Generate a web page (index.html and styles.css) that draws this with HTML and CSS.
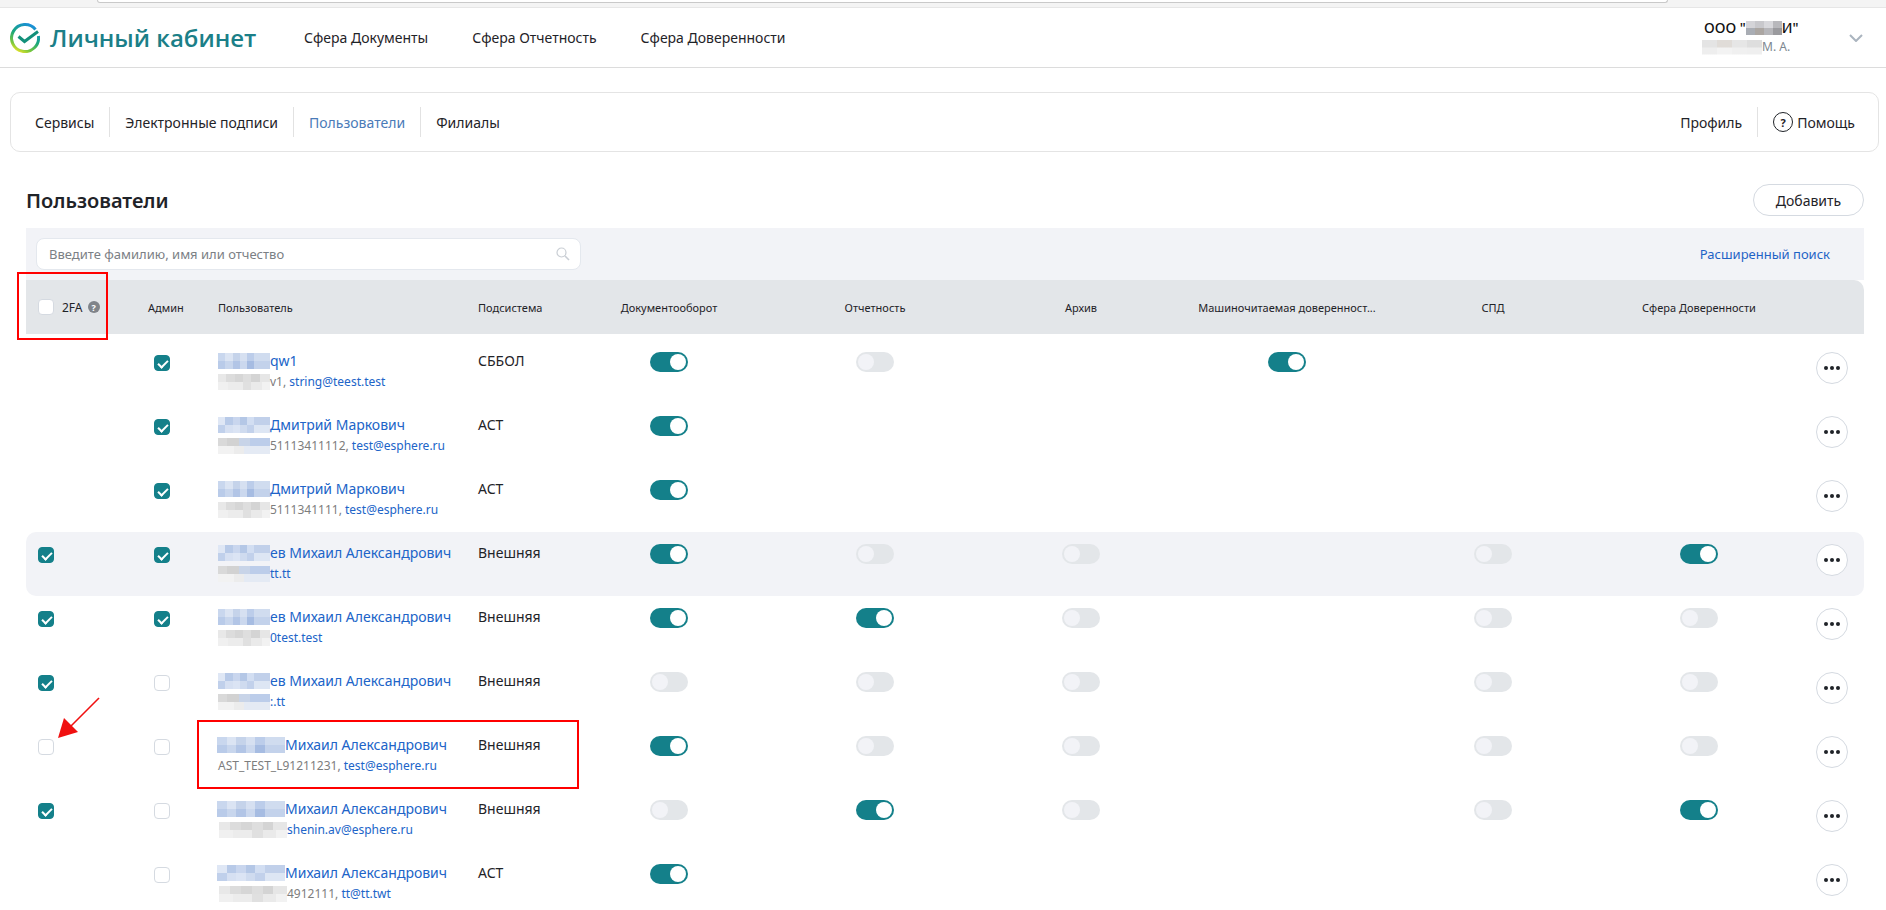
FILE: index.html
```html
<!DOCTYPE html>
<html lang="ru">
<head>
  <meta charset="UTF-8">
  <title>Личный кабинет</title>
  <link rel="stylesheet" href="styles.css">
</head>
<body>
  <div class="page">
    <div class="browser-strip"><div class="browser-pill"></div></div>

    <header class="header">
      <div class="logo">
        <svg class="logo-icon" viewBox="0 0 30 30" width="30" height="30">
          <defs>
            <linearGradient id="ring" x1="0.7" y1="0" x2="0.2" y2="1">
              <stop offset="0" stop-color="#1b8fd8"/>
              <stop offset="0.45" stop-color="#17a67c"/>
              <stop offset="0.8" stop-color="#7cc83c"/>
              <stop offset="1" stop-color="#e8e32c"/>
            </linearGradient>
          </defs>
          <path d="M25.5 6.5 A13.5 13.5 0 1 0 28.4 13" fill="none" stroke="url(#ring)" stroke-width="3"/>
          <path d="M8.5 13.5 L14.5 18.5 L28 8.5" fill="none" stroke="#12907a" stroke-width="3"/>
        </svg>
        <span class="logo-text">Личный кабинет</span>
      </div>
      <nav class="top-nav">
        <a>Сфера Документы</a>
        <a>Сфера Отчетность</a>
        <a>Сфера Доверенности</a>
      </nav>
      <div class="account">
        <div class="account-org">ООО "<span class="pix pix-org"></span>И"</div>
        <div class="account-user"><span class="pix pix-user"></span>М. А.</div>
      </div>
      <svg class="chevron" viewBox="0 0 14 8" width="14" height="8">
        <path d="M1 1 L7 7 L13 1" fill="none" stroke="#aab4bf" stroke-width="2"/>
      </svg>
    </header>

    <div class="sub-nav">
      <a class="sub-link">Сервисы</a>
      <a class="sub-link">Электронные подписи</a>
      <a class="sub-link active">Пользователи</a>
      <a class="sub-link last">Филиалы</a>
      <a class="sub-link right">Профиль</a>
      <a class="sub-link last help"><span class="help-icon">?</span>Помощь</a>
    </div>

    <main class="content">
      <div class="title-row">
        <h1>Пользователи</h1>
        <button class="btn-add">Добавить</button>
      </div>

      <div class="search-band">
        <div class="search-box">
          <span class="placeholder">Введите фамилию, имя или отчество</span>
          <svg viewBox="0 0 14 14" width="14" height="14">
            <circle cx="5.5" cy="5.5" r="4.5" fill="none" stroke="#c9ced4" stroke-width="1.2"/>
            <path d="M9 9 L13 13" stroke="#c9ced4" stroke-width="1.6"/>
          </svg>
        </div>
        <a class="adv-search">Расширенный поиск</a>
      </div>

      <div class="grid-row table-head">
        <div class="cell-first"><span class="check"></span><span class="fa">2FA</span><span class="fa-help">?</span></div>
        <div>Админ</div>
        <div>Пользователь</div>
        <div>Подсистема</div>
        <div class="center">Документооборот</div>
        <div class="center">Отчетность</div>
        <div class="center">Архив</div>
        <div class="center">Машиночитаемая доверенност...</div>
        <div class="center">СПД</div>
        <div class="center">Сфера Доверенности</div>
        <div></div>
      </div>

      <div class="grid-row user-row">
        <div class="cell-first"></div>
        <div class="cell-admin"><span class="check on"></span></div>
        <div>
          <div class="user-name"><span class="pix pix-n"></span>qw1</div>
          <div class="user-sub"><span class="pix pix-s"></span>v1, <a>string@teest.test</a></div>
        </div>
        <div class="system">СББОЛ</div>
        <div class="center"><span class="toggle on"></span></div>
        <div class="center"><span class="toggle"></span></div>
        <div class="center"></div>
        <div class="center"><span class="toggle on"></span></div>
        <div class="center"></div>
        <div class="center"></div>
        <div class="cell-more"><button class="btn-more"><i></i><i></i><i></i></button></div>
      </div>

      <div class="grid-row user-row">
        <div class="cell-first"></div>
        <div class="cell-admin"><span class="check on"></span></div>
        <div>
          <div class="user-name"><span class="pix pix-n alt"></span>Дмитрий Маркович</div>
          <div class="user-sub"><span class="pix pix-s alt"></span>51113411112, <a>test@esphere.ru</a></div>
        </div>
        <div class="system">АСТ</div>
        <div class="center"><span class="toggle on"></span></div>
        <div class="center"></div>
        <div class="center"></div>
        <div class="center"></div>
        <div class="center"></div>
        <div class="center"></div>
        <div class="cell-more"><button class="btn-more"><i></i><i></i><i></i></button></div>
      </div>

      <div class="grid-row user-row">
        <div class="cell-first"></div>
        <div class="cell-admin"><span class="check on"></span></div>
        <div>
          <div class="user-name"><span class="pix pix-n"></span>Дмитрий Маркович</div>
          <div class="user-sub"><span class="pix pix-s"></span>5111341111, <a>test@esphere.ru</a></div>
        </div>
        <div class="system">АСТ</div>
        <div class="center"><span class="toggle on"></span></div>
        <div class="center"></div>
        <div class="center"></div>
        <div class="center"></div>
        <div class="center"></div>
        <div class="center"></div>
        <div class="cell-more"><button class="btn-more"><i></i><i></i><i></i></button></div>
      </div>

      <div class="grid-row user-row selected">
        <div class="cell-first"><span class="check on"></span></div>
        <div class="cell-admin"><span class="check on"></span></div>
        <div>
          <div class="user-name"><span class="pix pix-n alt"></span>ев Михаил Александрович</div>
          <div class="user-sub"><span class="pix pix-s alt"></span><a>tt.tt</a></div>
        </div>
        <div class="system">Внешняя</div>
        <div class="center"><span class="toggle on"></span></div>
        <div class="center"><span class="toggle"></span></div>
        <div class="center"><span class="toggle"></span></div>
        <div class="center"></div>
        <div class="center"><span class="toggle"></span></div>
        <div class="center"><span class="toggle on"></span></div>
        <div class="cell-more"><button class="btn-more"><i></i><i></i><i></i></button></div>
      </div>

      <div class="grid-row user-row">
        <div class="cell-first"><span class="check on"></span></div>
        <div class="cell-admin"><span class="check on"></span></div>
        <div>
          <div class="user-name"><span class="pix pix-n"></span>ев Михаил Александрович</div>
          <div class="user-sub"><span class="pix pix-s"></span><a>0test.test</a></div>
        </div>
        <div class="system">Внешняя</div>
        <div class="center"><span class="toggle on"></span></div>
        <div class="center"><span class="toggle on"></span></div>
        <div class="center"><span class="toggle"></span></div>
        <div class="center"></div>
        <div class="center"><span class="toggle"></span></div>
        <div class="center"><span class="toggle"></span></div>
        <div class="cell-more"><button class="btn-more"><i></i><i></i><i></i></button></div>
      </div>

      <div class="grid-row user-row">
        <div class="cell-first"><span class="check on"></span></div>
        <div class="cell-admin"><span class="check"></span></div>
        <div>
          <div class="user-name"><span class="pix pix-n alt"></span>ев Михаил Александрович</div>
          <div class="user-sub"><span class="pix pix-s alt"></span><a>:.tt</a></div>
        </div>
        <div class="system">Внешняя</div>
        <div class="center"><span class="toggle"></span></div>
        <div class="center"><span class="toggle"></span></div>
        <div class="center"><span class="toggle"></span></div>
        <div class="center"></div>
        <div class="center"><span class="toggle"></span></div>
        <div class="center"><span class="toggle"></span></div>
        <div class="cell-more"><button class="btn-more"><i></i><i></i><i></i></button></div>
      </div>

      <div class="grid-row user-row">
        <div class="cell-first"><span class="check"></span></div>
        <div class="cell-admin"><span class="check"></span></div>
        <div>
          <div class="user-name"><span class="pix pix-n wide"></span>Михаил Александрович</div>
          <div class="user-sub">AST_TEST_L91211231, <a>test@esphere.ru</a></div>
        </div>
        <div class="system">Внешняя</div>
        <div class="center"><span class="toggle on"></span></div>
        <div class="center"><span class="toggle"></span></div>
        <div class="center"><span class="toggle"></span></div>
        <div class="center"></div>
        <div class="center"><span class="toggle"></span></div>
        <div class="center"><span class="toggle"></span></div>
        <div class="cell-more"><button class="btn-more"><i></i><i></i><i></i></button></div>
      </div>

      <div class="grid-row user-row">
        <div class="cell-first"><span class="check on"></span></div>
        <div class="cell-admin"><span class="check"></span></div>
        <div>
          <div class="user-name"><span class="pix pix-n wide"></span>Михаил Александрович</div>
          <div class="user-sub"><span class="pix pix-s wide"></span><a>shenin.av@esphere.ru</a></div>
        </div>
        <div class="system">Внешняя</div>
        <div class="center"><span class="toggle"></span></div>
        <div class="center"><span class="toggle on"></span></div>
        <div class="center"><span class="toggle"></span></div>
        <div class="center"></div>
        <div class="center"><span class="toggle"></span></div>
        <div class="center"><span class="toggle on"></span></div>
        <div class="cell-more"><button class="btn-more"><i></i><i></i><i></i></button></div>
      </div>

      <div class="grid-row user-row">
        <div class="cell-first"></div>
        <div class="cell-admin"><span class="check"></span></div>
        <div>
          <div class="user-name"><span class="pix pix-n wide alt"></span>Михаил Александрович</div>
          <div class="user-sub"><span class="pix pix-s wide"></span>4912111, <a>tt@tt.twt</a></div>
        </div>
        <div class="system">АСТ</div>
        <div class="center"><span class="toggle on"></span></div>
        <div class="center"></div>
        <div class="center"></div>
        <div class="center"></div>
        <div class="center"></div>
        <div class="center"></div>
        <div class="cell-more"><button class="btn-more"><i></i><i></i><i></i></button></div>
      </div>
    </main>

    <!-- red marks drawn over the screenshot -->
    <div class="mark mark-2fa"></div>
    <div class="mark mark-user"></div>
    <svg class="mark-arrow" viewBox="0 0 44 42" width="44" height="42">
      <path d="M42 1 L12 31" stroke="#f01010" stroke-width="1.6"/>
      <path d="M1 41 L7 21 L21 35 Z" fill="#f01010"/>
    </svg>
  </div>
</body>
</html>
```

FILE: styles.css
```css
* {
  box-sizing: border-box;
}
html, body {
  margin: 0;
  height: 910px;
  overflow: hidden;
}
body {
  font-family: "Noto Sans", "Open Sans", sans-serif;
  font-size: 14px;
  color: #1f2328;
  background-color: #fff;
}
a {
  color: inherit;
}
.page {
  position: relative;
  height: 910px;
  overflow: hidden;
}
.browser-strip {
  height: 7px;
  background-color: #f4f4f4;
  padding-left: 97px;
  padding-right: 218px;
}
.browser-pill {
  height: 3px;
  background-color: #fff;
  border: 1px solid #c9c9c9;
  border-top: none;
  border-radius: 0 0 6px 6px;
}

/* top bar */
.header {
  display: flex;
  align-items: center;
  height: 61px;
  padding: 0 23px 0 10px;
  border-top: 1px solid #e6e6e6;
  border-bottom: 1px solid #dcdcdc;
}
.logo {
  display: flex;
  align-items: center;
  gap: 10px;
  width: 294px;
}
.logo-icon {
  flex: none;
}
.logo-text {
  font-family: "Open Sans", sans-serif;
  font-size: 24px;
  font-weight: 600;
  color: #1b7f88;
  white-space: nowrap;
}
.top-nav {
  display: flex;
  gap: 44px;
  flex: 1;
}
.account {
  width: 145px;
}
.account-org {
  font-size: 14px;
  font-weight: 500;
  line-height: 18px;
  color: #111;
}
.account-user {
  display: flex;
  align-items: center;
  font-size: 12px;
  line-height: 18px;
  color: #7d8790;
  margin-left: -2px;
  margin-top: 1px;
}
.chevron {
  flex: none;
}

/* mosaics over hidden names */
.pix {
  display: inline-block;
  vertical-align: middle;
  background-repeat: no-repeat;
  background-size: 100% 50%;
  background-position: left top, left bottom;
}
.pix-n {
  width: 52px;
  height: 16px;
  margin-top: -2px;
  background-image:
    linear-gradient(90deg, #c9d7ee 0 14%, #dbe4f3 14% 28%, #c5d3ea 28% 42%, #d6e0f1 42% 56%, #bccdea 56% 70%, #d0dcef 70% 100%),
    linear-gradient(90deg, #b9cbe9 0 14%, #c8d6ed 14% 28%, #b2c5e6 28% 42%, #cbd8ee 42% 56%, #a6bce2 56% 70%, #c3d2eb 70% 100%);
}
.pix-n.alt {
  background-image:
    linear-gradient(90deg, #dfe7f5 0 14%, #b8cae8 14% 28%, #c9d6ee 28% 42%, #b4c7e6 42% 56%, #d2deF2 56% 70%, #c1d0ea 70% 100%),
    linear-gradient(90deg, #c0d0eb 0 14%, #d6e0f2 14% 28%, #dbe4f4 28% 42%, #cfdbef 42% 56%, #c2d1eb 56% 70%, #dde6f4 70% 100%);
}
.pix-n.wide {
  width: 68px;
  margin-left: -1px;
}
.pix-s {
  width: 52px;
  height: 16px;
  margin-top: -2px;
  background-image:
    linear-gradient(90deg, #e8e8e8 0 16%, #dcdcdc 16% 32%, #d6d6d6 32% 48%, #dedede 48% 64%, #d4d4d4 64% 80%, #e6e6e6 80% 100%),
    linear-gradient(90deg, #f0f0f0 0 20%, #ececec 20% 48%, #e0e0e0 48% 64%, #eaeaea 64% 84%, #f2f2f2 84% 100%);
}
.pix-s.alt {
  background-image:
    linear-gradient(90deg, #d9d9d9 0 18%, #d2d2d2 18% 40%, #c8d4e8 40% 62%, #bccdea 62% 100%),
    linear-gradient(90deg, #f2f2f2 0 30%, #ececec 30% 50%, #e4eaf4 50% 100%);
}
.pix-s.wide {
  width: 68px;
  margin-left: 1px;
}
.pix-org {
  width: 36px;
  height: 14px;
  margin-top: -2px;
  background-image:
    linear-gradient(90deg, #d4d4d8 0 25%, #c8c8cc 25% 50%, #d8d8dc 50% 75%, #b8b8bc 75% 100%),
    linear-gradient(90deg, #a9adb4 0 25%, #aba6a2 25% 50%, #b6b6ba 50% 75%, #9a9a9e 75% 100%);
}
.pix-user {
  width: 60px;
  height: 15px;
  background-image:
    linear-gradient(90deg, #e4e4e4 0 25%, #e0dcd8 25% 50%, #e6e6e6 50% 75%, #dedede 75% 100%),
    linear-gradient(90deg, #eeeeee 0 25%, #f3f3f3 25% 50%, #f0f0f0 50% 75%, #efefef 75% 100%);
}

/* section menu */
.sub-nav {
  display: flex;
  align-items: center;
  height: 60px;
  margin: 24px 7px 0 10px;
  padding: 0 9px;
  background-color: #fff;
  border: 1px solid #e4e4e4;
  border-radius: 10px;
}
.sub-link {
  display: flex;
  align-items: center;
  height: 30px;
  padding: 0 15px;
  border-right: 1px solid #e2e2e2;
}
.sub-link.last {
  border-right: none;
}
.sub-link.active {
  color: #4a7bb8;
}
.sub-link.right {
  margin-left: auto;
}
.help {
  gap: 4px;
  padding-right: 14px;
}
.help-icon {
  display: inline-flex;
  align-items: center;
  justify-content: center;
  width: 20px;
  height: 20px;
  border: 1.5px solid #1f2328;
  border-radius: 50%;
  font-size: 11px;
  font-weight: 700;
}

/* users block */
.content {
  padding: 0 22px 0 26px;
}
.title-row {
  display: flex;
  align-items: center;
  justify-content: space-between;
  height: 32px;
  margin-top: 32px;
  margin-bottom: 12px;
}
h1 {
  margin: 0;
  font-size: 20px;
  font-weight: 600;
  color: #1f2328;
}
.btn-add {
  width: 111px;
  height: 32px;
  font: inherit;
  color: #1f2328;
  background-color: #fff;
  border: 1px solid #d5dae1;
  border-radius: 16px;
}
.search-band {
  display: flex;
  align-items: center;
  justify-content: space-between;
  height: 52px;
  padding: 0 34px 0 10px;
  background-color: #f2f3f7;
}
.search-box {
  display: flex;
  align-items: center;
  justify-content: space-between;
  width: 545px;
  height: 32px;
  padding: 0 10px 0 12px;
  background-color: #fff;
  border: 1px solid #e4e8ee;
  border-radius: 8px;
}
.placeholder {
  font-size: 13px;
  color: #7b8085;
}
.adv-search {
  font-size: 13px;
  color: #1f63c6;
}
.grid-row {
  display: grid;
  grid-template-columns: 122px 70px 260px 88px repeat(6, 206px) 62px;
}
.table-head {
  height: 54px;
  align-items: center;
  font-size: 11px;
  background-color: #e3e6e9;
  border-radius: 0 10px 0 0;
  margin-bottom: 6px;
}
.center {
  text-align: center;
}
.cell-first {
  display: flex;
  align-items: center;
  gap: 8px;
  padding-left: 12px;
}
.fa {
  font-size: 12px;
}
.fa-help {
  display: inline-flex;
  align-items: center;
  justify-content: center;
  width: 12px;
  height: 12px;
  margin-left: -3px;
  font-size: 9px;
  font-weight: 700;
  color: #fff;
  background-color: #80848a;
  border-radius: 50%;
}
.user-row {
  height: 64px;
  padding-top: 12px;
  border-radius: 10px;
}
.user-row.selected {
  background-color: #f2f3f7;
}
.user-row .cell-first {
  align-items: flex-start;
  padding-top: 3px;
}
.cell-admin {
  padding: 3px 0 0 6px;
}
.check {
  position: relative;
  display: inline-block;
  width: 16px;
  height: 16px;
  background-color: #fff;
  border: 1px solid #d5dae1;
  border-radius: 4px;
}
.check.on {
  background-color: #14808a;
  border-color: #14808a;
}
.check.on::after {
  content: "";
  position: absolute;
  left: 4.5px;
  top: 1.5px;
  width: 4px;
  height: 8px;
  border: solid #fff;
  border-width: 0 2px 2px 0;
  transform: rotate(45deg);
}
.user-name {
  font-size: 14px;
  line-height: 18px;
  color: #2064c8;
  white-space: nowrap;
}
.user-sub {
  margin-top: 3px;
  font-size: 12px;
  line-height: 18px;
  color: #7d7d7d;
  white-space: nowrap;
}
.user-sub a {
  color: #2064c8;
}
.system {
  line-height: 18px;
  font-size: 14px;
}
.toggle {
  position: relative;
  display: inline-block;
  width: 38px;
  height: 20px;
  background-color: #e3e6e9;
  border-radius: 10px;
}
.toggle::after {
  content: "";
  position: absolute;
  left: 2px;
  top: 2px;
  width: 16px;
  height: 16px;
  background-color: #f2f3f7;
  border-radius: 50%;
}
.toggle.on {
  background-color: #14808a;
}
.toggle.on::after {
  left: 20px;
  background-color: #fff;
}
.cell-more {
  padding-left: 14px;
}
.btn-more {
  display: flex;
  align-items: center;
  justify-content: center;
  gap: 2px;
  width: 32px;
  height: 32px;
  padding: 0;
  background-color: #fff;
  border: 1px solid #d5dae1;
  border-radius: 50%;
}
.btn-more i {
  width: 4px;
  height: 4px;
  background-color: #1f2328;
  border-radius: 50%;
}

/* red annotations */
.mark {
  position: absolute;
  border: 2px solid #f00;
}
.mark-2fa {
  left: 17px;
  top: 272px;
  width: 91px;
  height: 68px;
}
.mark-user {
  left: 197px;
  top: 720px;
  width: 382px;
  height: 69px;
}
.mark-arrow {
  position: absolute;
  left: 57px;
  top: 697px;
}
```
